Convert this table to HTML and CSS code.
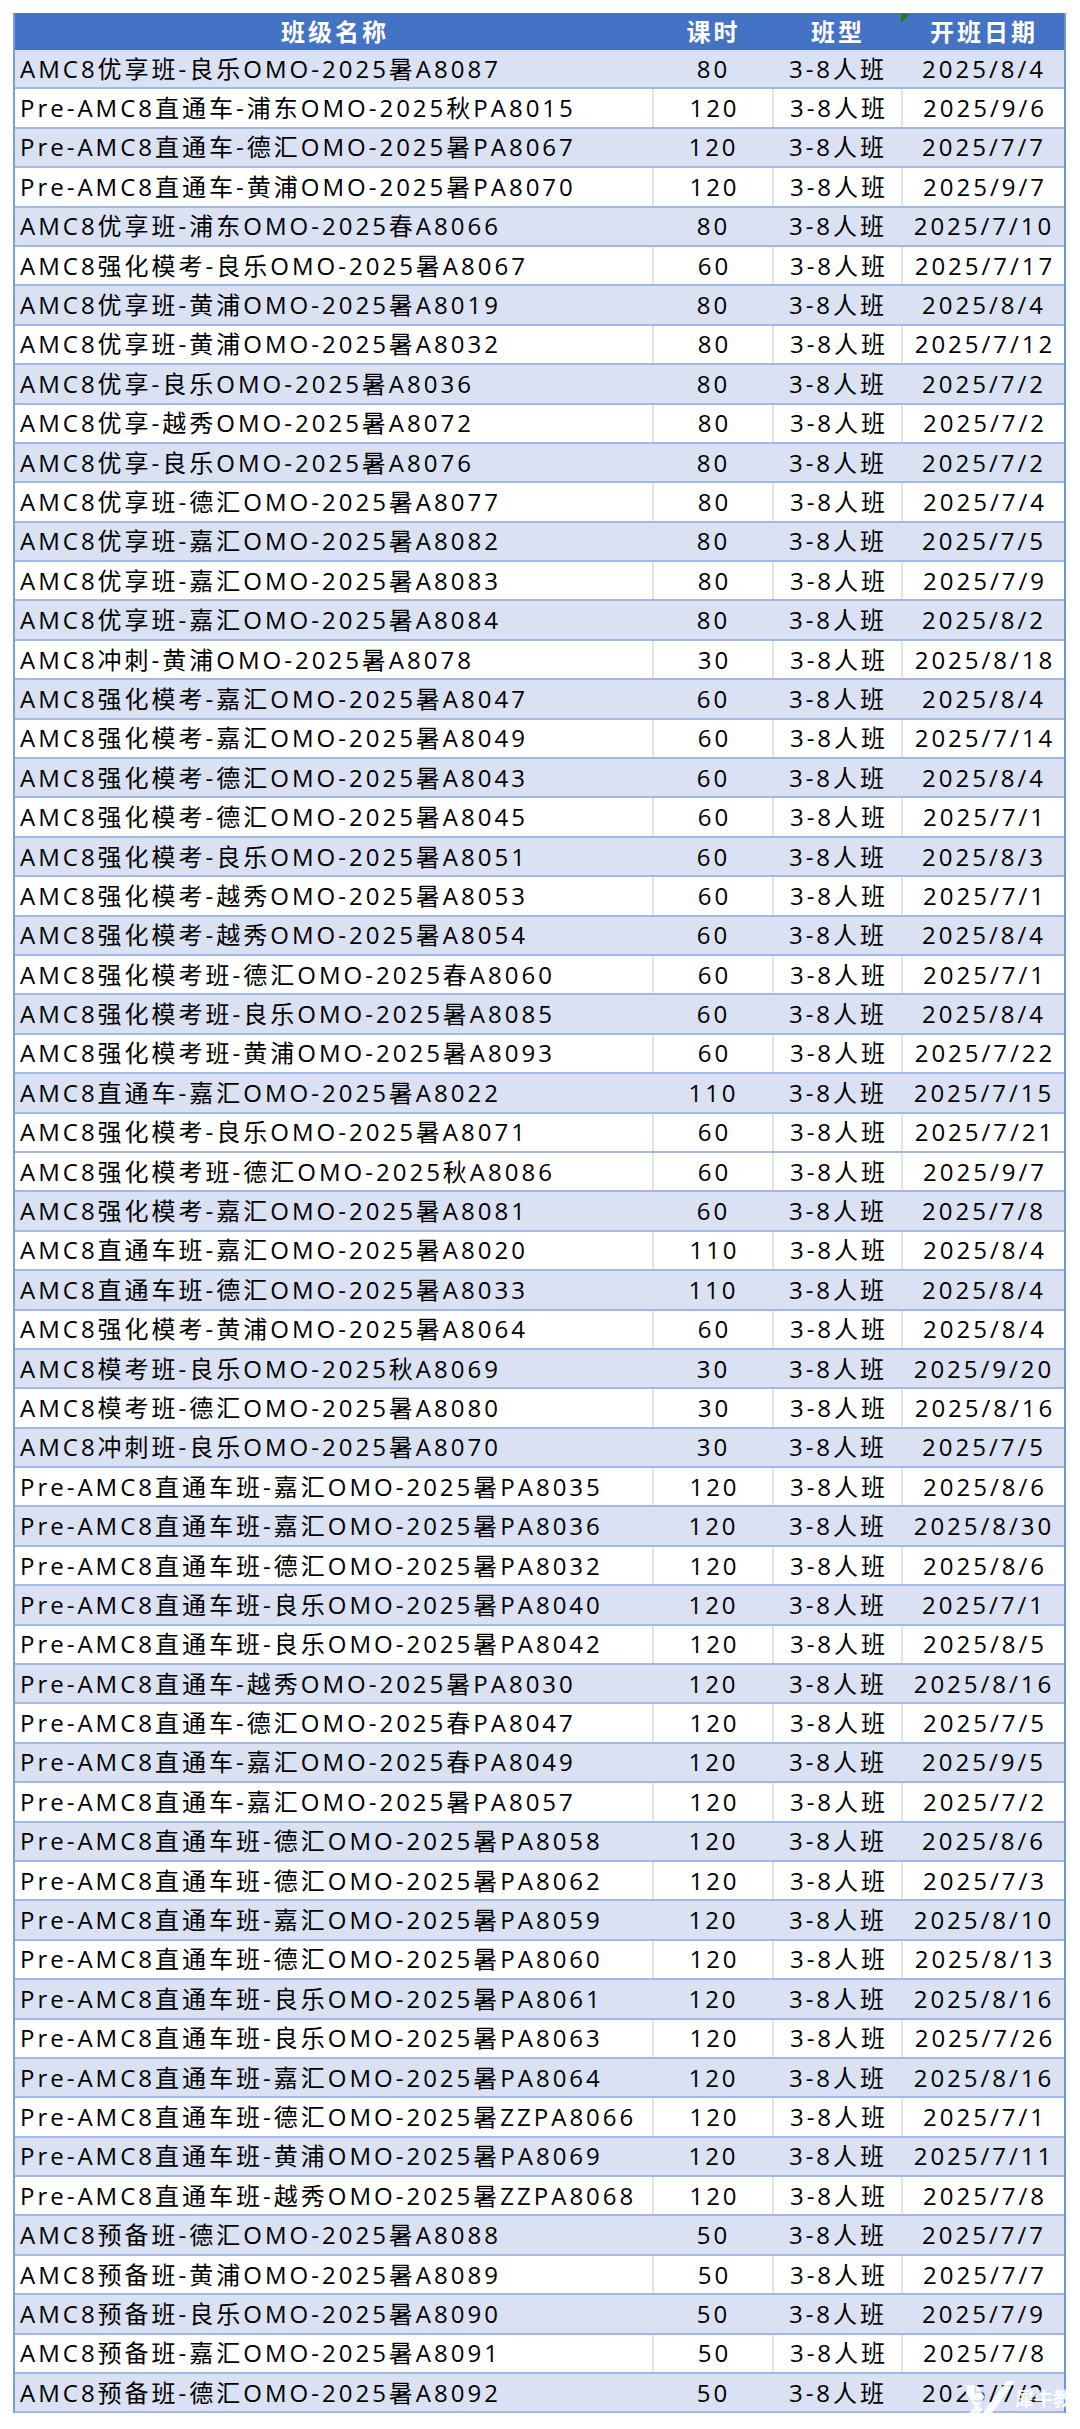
FILE: index.html
```html
<!DOCTYPE html>
<html lang="zh-CN">
<head>
<meta charset="utf-8">
<title>AMC8 班级列表</title>
<link rel="stylesheet" href="styles.css">
</head>
<body>
<div class="sheet">
  <div class="table">
    <div class="row head">
      <div class="c">班级名称</div><div class="c">课时</div><div class="c">班型</div><div class="c date">开班日期<span class="flag"></span></div>
    </div>
    <div class="row b"><div class="c name">AMC8优享班-良乐OMO-2025暑A8087</div><div class="c">80</div><div class="c">3-8人班</div><div class="c">2025/8/4</div></div>
    <div class="row w"><div class="c name">Pre-AMC8直通车-浦东OMO-2025秋PA8015</div><div class="c">120</div><div class="c">3-8人班</div><div class="c">2025/9/6</div></div>
    <div class="row b"><div class="c name">Pre-AMC8直通车-德汇OMO-2025暑PA8067</div><div class="c">120</div><div class="c">3-8人班</div><div class="c">2025/7/7</div></div>
    <div class="row w"><div class="c name">Pre-AMC8直通车-黄浦OMO-2025暑PA8070</div><div class="c">120</div><div class="c">3-8人班</div><div class="c">2025/9/7</div></div>
    <div class="row b"><div class="c name">AMC8优享班-浦东OMO-2025春A8066</div><div class="c">80</div><div class="c">3-8人班</div><div class="c">2025/7/10</div></div>
    <div class="row w"><div class="c name">AMC8强化模考-良乐OMO-2025暑A8067</div><div class="c">60</div><div class="c">3-8人班</div><div class="c">2025/7/17</div></div>
    <div class="row b"><div class="c name">AMC8优享班-黄浦OMO-2025暑A8019</div><div class="c">80</div><div class="c">3-8人班</div><div class="c">2025/8/4</div></div>
    <div class="row w"><div class="c name">AMC8优享班-黄浦OMO-2025暑A8032</div><div class="c">80</div><div class="c">3-8人班</div><div class="c">2025/7/12</div></div>
    <div class="row b"><div class="c name">AMC8优享-良乐OMO-2025暑A8036</div><div class="c">80</div><div class="c">3-8人班</div><div class="c">2025/7/2</div></div>
    <div class="row w"><div class="c name">AMC8优享-越秀OMO-2025暑A8072</div><div class="c">80</div><div class="c">3-8人班</div><div class="c">2025/7/2</div></div>
    <div class="row b"><div class="c name">AMC8优享-良乐OMO-2025暑A8076</div><div class="c">80</div><div class="c">3-8人班</div><div class="c">2025/7/2</div></div>
    <div class="row w"><div class="c name">AMC8优享班-德汇OMO-2025暑A8077</div><div class="c">80</div><div class="c">3-8人班</div><div class="c">2025/7/4</div></div>
    <div class="row b"><div class="c name">AMC8优享班-嘉汇OMO-2025暑A8082</div><div class="c">80</div><div class="c">3-8人班</div><div class="c">2025/7/5</div></div>
    <div class="row w"><div class="c name">AMC8优享班-嘉汇OMO-2025暑A8083</div><div class="c">80</div><div class="c">3-8人班</div><div class="c">2025/7/9</div></div>
    <div class="row b"><div class="c name">AMC8优享班-嘉汇OMO-2025暑A8084</div><div class="c">80</div><div class="c">3-8人班</div><div class="c">2025/8/2</div></div>
    <div class="row w"><div class="c name">AMC8冲刺-黄浦OMO-2025暑A8078</div><div class="c">30</div><div class="c">3-8人班</div><div class="c">2025/8/18</div></div>
    <div class="row b"><div class="c name">AMC8强化模考-嘉汇OMO-2025暑A8047</div><div class="c">60</div><div class="c">3-8人班</div><div class="c">2025/8/4</div></div>
    <div class="row w"><div class="c name">AMC8强化模考-嘉汇OMO-2025暑A8049</div><div class="c">60</div><div class="c">3-8人班</div><div class="c">2025/7/14</div></div>
    <div class="row b"><div class="c name">AMC8强化模考-德汇OMO-2025暑A8043</div><div class="c">60</div><div class="c">3-8人班</div><div class="c">2025/8/4</div></div>
    <div class="row w"><div class="c name">AMC8强化模考-德汇OMO-2025暑A8045</div><div class="c">60</div><div class="c">3-8人班</div><div class="c">2025/7/1</div></div>
    <div class="row b"><div class="c name">AMC8强化模考-良乐OMO-2025暑A8051</div><div class="c">60</div><div class="c">3-8人班</div><div class="c">2025/8/3</div></div>
    <div class="row w"><div class="c name">AMC8强化模考-越秀OMO-2025暑A8053</div><div class="c">60</div><div class="c">3-8人班</div><div class="c">2025/7/1</div></div>
    <div class="row b"><div class="c name">AMC8强化模考-越秀OMO-2025暑A8054</div><div class="c">60</div><div class="c">3-8人班</div><div class="c">2025/8/4</div></div>
    <div class="row w"><div class="c name">AMC8强化模考班-德汇OMO-2025春A8060</div><div class="c">60</div><div class="c">3-8人班</div><div class="c">2025/7/1</div></div>
    <div class="row b"><div class="c name">AMC8强化模考班-良乐OMO-2025暑A8085</div><div class="c">60</div><div class="c">3-8人班</div><div class="c">2025/8/4</div></div>
    <div class="row w"><div class="c name">AMC8强化模考班-黄浦OMO-2025暑A8093</div><div class="c">60</div><div class="c">3-8人班</div><div class="c">2025/7/22</div></div>
    <div class="row b"><div class="c name">AMC8直通车-嘉汇OMO-2025暑A8022</div><div class="c">110</div><div class="c">3-8人班</div><div class="c">2025/7/15</div></div>
    <div class="row w"><div class="c name">AMC8强化模考-良乐OMO-2025暑A8071</div><div class="c">60</div><div class="c">3-8人班</div><div class="c">2025/7/21</div></div>
    <div class="row w"><div class="c name">AMC8强化模考班-德汇OMO-2025秋A8086</div><div class="c">60</div><div class="c">3-8人班</div><div class="c">2025/9/7</div></div>
    <div class="row b"><div class="c name">AMC8强化模考-嘉汇OMO-2025暑A8081</div><div class="c">60</div><div class="c">3-8人班</div><div class="c">2025/7/8</div></div>
    <div class="row w"><div class="c name">AMC8直通车班-嘉汇OMO-2025暑A8020</div><div class="c">110</div><div class="c">3-8人班</div><div class="c">2025/8/4</div></div>
    <div class="row b"><div class="c name">AMC8直通车班-德汇OMO-2025暑A8033</div><div class="c">110</div><div class="c">3-8人班</div><div class="c">2025/8/4</div></div>
    <div class="row w"><div class="c name">AMC8强化模考-黄浦OMO-2025暑A8064</div><div class="c">60</div><div class="c">3-8人班</div><div class="c">2025/8/4</div></div>
    <div class="row b"><div class="c name">AMC8模考班-良乐OMO-2025秋A8069</div><div class="c">30</div><div class="c">3-8人班</div><div class="c">2025/9/20</div></div>
    <div class="row w"><div class="c name">AMC8模考班-德汇OMO-2025暑A8080</div><div class="c">30</div><div class="c">3-8人班</div><div class="c">2025/8/16</div></div>
    <div class="row b"><div class="c name">AMC8冲刺班-良乐OMO-2025暑A8070</div><div class="c">30</div><div class="c">3-8人班</div><div class="c">2025/7/5</div></div>
    <div class="row w"><div class="c name">Pre-AMC8直通车班-嘉汇OMO-2025暑PA8035</div><div class="c">120</div><div class="c">3-8人班</div><div class="c">2025/8/6</div></div>
    <div class="row b"><div class="c name">Pre-AMC8直通车班-嘉汇OMO-2025暑PA8036</div><div class="c">120</div><div class="c">3-8人班</div><div class="c">2025/8/30</div></div>
    <div class="row w"><div class="c name">Pre-AMC8直通车班-德汇OMO-2025暑PA8032</div><div class="c">120</div><div class="c">3-8人班</div><div class="c">2025/8/6</div></div>
    <div class="row b"><div class="c name">Pre-AMC8直通车班-良乐OMO-2025暑PA8040</div><div class="c">120</div><div class="c">3-8人班</div><div class="c">2025/7/1</div></div>
    <div class="row w"><div class="c name">Pre-AMC8直通车班-良乐OMO-2025暑PA8042</div><div class="c">120</div><div class="c">3-8人班</div><div class="c">2025/8/5</div></div>
    <div class="row b"><div class="c name">Pre-AMC8直通车-越秀OMO-2025暑PA8030</div><div class="c">120</div><div class="c">3-8人班</div><div class="c">2025/8/16</div></div>
    <div class="row w"><div class="c name">Pre-AMC8直通车-德汇OMO-2025春PA8047</div><div class="c">120</div><div class="c">3-8人班</div><div class="c">2025/7/5</div></div>
    <div class="row b"><div class="c name">Pre-AMC8直通车-嘉汇OMO-2025春PA8049</div><div class="c">120</div><div class="c">3-8人班</div><div class="c">2025/9/5</div></div>
    <div class="row w"><div class="c name">Pre-AMC8直通车-嘉汇OMO-2025暑PA8057</div><div class="c">120</div><div class="c">3-8人班</div><div class="c">2025/7/2</div></div>
    <div class="row b"><div class="c name">Pre-AMC8直通车班-德汇OMO-2025暑PA8058</div><div class="c">120</div><div class="c">3-8人班</div><div class="c">2025/8/6</div></div>
    <div class="row w"><div class="c name">Pre-AMC8直通车班-德汇OMO-2025暑PA8062</div><div class="c">120</div><div class="c">3-8人班</div><div class="c">2025/7/3</div></div>
    <div class="row b"><div class="c name">Pre-AMC8直通车班-嘉汇OMO-2025暑PA8059</div><div class="c">120</div><div class="c">3-8人班</div><div class="c">2025/8/10</div></div>
    <div class="row w"><div class="c name">Pre-AMC8直通车班-德汇OMO-2025暑PA8060</div><div class="c">120</div><div class="c">3-8人班</div><div class="c">2025/8/13</div></div>
    <div class="row b"><div class="c name">Pre-AMC8直通车班-良乐OMO-2025暑PA8061</div><div class="c">120</div><div class="c">3-8人班</div><div class="c">2025/8/16</div></div>
    <div class="row w"><div class="c name">Pre-AMC8直通车班-良乐OMO-2025暑PA8063</div><div class="c">120</div><div class="c">3-8人班</div><div class="c">2025/7/26</div></div>
    <div class="row b"><div class="c name">Pre-AMC8直通车班-嘉汇OMO-2025暑PA8064</div><div class="c">120</div><div class="c">3-8人班</div><div class="c">2025/8/16</div></div>
    <div class="row w"><div class="c name">Pre-AMC8直通车班-德汇OMO-2025暑ZZPA8066</div><div class="c">120</div><div class="c">3-8人班</div><div class="c">2025/7/1</div></div>
    <div class="row b"><div class="c name">Pre-AMC8直通车班-黄浦OMO-2025暑PA8069</div><div class="c">120</div><div class="c">3-8人班</div><div class="c">2025/7/11</div></div>
    <div class="row w"><div class="c name">Pre-AMC8直通车班-越秀OMO-2025暑ZZPA8068</div><div class="c">120</div><div class="c">3-8人班</div><div class="c">2025/7/8</div></div>
    <div class="row b"><div class="c name">AMC8预备班-德汇OMO-2025暑A8088</div><div class="c">50</div><div class="c">3-8人班</div><div class="c">2025/7/7</div></div>
    <div class="row w"><div class="c name">AMC8预备班-黄浦OMO-2025暑A8089</div><div class="c">50</div><div class="c">3-8人班</div><div class="c">2025/7/7</div></div>
    <div class="row b"><div class="c name">AMC8预备班-良乐OMO-2025暑A8090</div><div class="c">50</div><div class="c">3-8人班</div><div class="c">2025/7/9</div></div>
    <div class="row w"><div class="c name">AMC8预备班-嘉汇OMO-2025暑A8091</div><div class="c">50</div><div class="c">3-8人班</div><div class="c">2025/7/8</div></div>
    <div class="row b"><div class="c name">AMC8预备班-德汇OMO-2025暑A8092</div><div class="c">50</div><div class="c">3-8人班</div><div class="c">2025/7/2</div></div>
    <svg class="watermark" width="130" height="48" viewBox="0 0 130 48" aria-hidden="true">
      <path d="M6 6 L22 6 L30 18 L22 30 Z" fill="#fff" opacity="0.85"/>
      <path d="M52 2 L60 2 L30 44 L20 44 Z" fill="#fff" opacity="0.9"/>
      <path d="M10 38 L22 26 L28 30 L18 44 Z" fill="#fff" opacity="0.85"/>
      <text x="60" y="27" font-size="19" font-weight="700" fill="#fff" opacity="0.9" font-family="Noto Sans CJK SC, sans-serif">犀牛教育</text>
      <text x="62" y="46" font-size="10" fill="#fff" opacity="0.9" letter-spacing="7" font-family="Open Sans, sans-serif">XNEU</text>
    </svg>
  </div>
</div>
</body>
</html>
```
FILE: styles.css
```css
html, body {
  margin: 0;
  padding: 0;
  background: #ffffff;
}

body {
  font-family: "Open Sans", "Noto Sans CJK SC", sans-serif;
  color: #000;
}

.sheet {
  padding: 13px 0 0 13px;
}

.table {
  position: relative;
  width: 1053px;
  box-sizing: border-box;
  border-left: 2px solid #7e9edb;
  border-right: 2px solid #6f92d8;
}

.row {
  display: grid;
  grid-template-columns: 637px 120px 129px 163px;
  height: 39.4px;
  box-sizing: border-box;
  border-bottom: 2px solid #a3b8e4;
  font-size: 24px;
  letter-spacing: 3px;
  line-height: 1;
}

.row.head {
  height: 37px;
  border-bottom: none;
  background: #4472c4;
  color: #ffffff;
  font-weight: 700;
}

.row.b {
  background: #d9e1f2;
}

.row.w {
  background: #ffffff;
}

.c {
  display: flex;
  align-items: center;
  justify-content: center;
  padding-left: 3px;
  white-space: nowrap;
  overflow: hidden;
  box-sizing: border-box;
}

.row.w .c + .c {
  border-left: 2px solid #e3e3e3;
}

.c.name {
  justify-content: flex-start;
  padding-left: 5px;
}

.c.date {
  position: relative;
  overflow: visible;
}

.flag {
  position: absolute;
  left: 0;
  top: 1px;
  width: 0;
  height: 0;
  border-top: 9px solid #1e7b1e;
  border-right: 9px solid transparent;
}

.watermark {
  position: absolute;
  left: 940px;
  top: 2366px;
}
```
